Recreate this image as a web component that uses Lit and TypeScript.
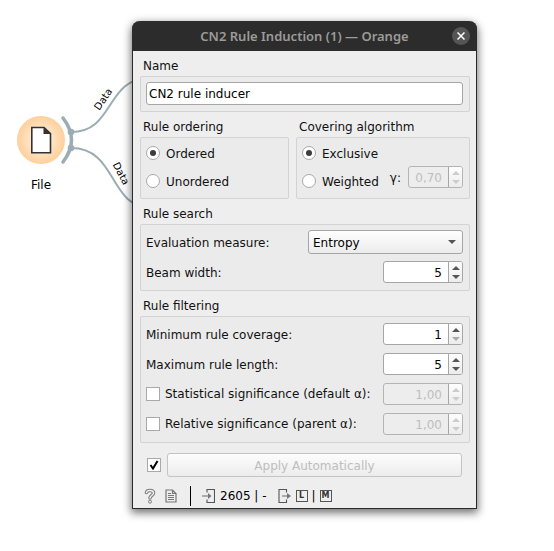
import { LitElement, html, svg, css } from "lit";
import { customElement, property } from "lit/decorators.js";

/** Numeric field with stacked up/down step buttons. */
@customElement("spin-box")
class SpinBox extends LitElement {
  @property() value = "";
  @property() label = "";
  @property({ type: Boolean }) disabled = false;
  @property({ type: Boolean }) atMinimum = false;

  static styles = css`
    :host {
      display: flex;
      box-sizing: border-box;
      width: 80px;
      height: 22px;
      border: 1px solid #a6a6a6;
      border-radius: 3px;
      overflow: hidden;
      background: #fff;
      font: 12px "DejaVu Sans", sans-serif;
    }
    :host([disabled]) {
      border-color: #b4b4b4;
      background: #ededed;
    }
    input {
      flex: 1;
      min-width: 0;
      margin: 0;
      padding: 1px 6px 0;
      border: 0;
      outline: 0;
      background: none;
      color: #000;
      font: inherit;
      text-align: right;
    }
    input:disabled {
      color: #bebebe;
    }
    .steps {
      display: flex;
      flex-direction: column;
      box-sizing: border-box;
      width: 14px;
      padding: 1px 0;
      border-left: 1px solid #a6a6a6;
      background: linear-gradient(#fefefe, #ececec);
    }
    button {
      flex: 1;
      display: flex;
      align-items: center;
      justify-content: center;
      margin: 0;
      padding: 0;
      border: 0;
      background: none;
      color: #555;
    }
    button:disabled {
      color: #aaa;
    }
    :host([disabled]) button {
      color: #ccc;
    }
    svg {
      display: block;
      fill: currentColor;
    }
  `;

  render() {
    return html`
      <input
        type="text"
        inputmode="decimal"
        aria-label=${this.label}
        .value=${this.value}
        ?disabled=${this.disabled}
      />
      <div class="steps">
        <button aria-label="Increase" ?disabled=${this.disabled}>
          <svg width="8" height="4" viewBox="0 0 8 4"><path d="M0 4L4 0L8 4Z" /></svg>
        </button>
        <button aria-label="Decrease" ?disabled=${this.disabled || this.atMinimum}>
          <svg width="8" height="4" viewBox="0 0 8 4"><path d="M0 0L4 4L8 0Z" /></svg>
        </button>
      </div>
    `;
  }
}

const fileNode = svg`
  <defs>
    <radialGradient id="glow">
      <stop offset="0" stop-color="#fff3e3" />
      <stop offset="0.5" stop-color="#ffe3c3" />
      <stop offset="1" stop-color="#ffcf9b" />
    </radialGradient>
  </defs>
  <g fill="none" stroke="#9cacb4" stroke-width="2">
    <path d="M71 132C115 132 105 78 150 78" />
    <path d="M71 148C118 148 108 208 152 208" />
    <path d="M63 118Q80 140 63 162" stroke-width="3.5" stroke-linecap="round" />
  </g>
  <circle cx="71" cy="132" r="3.3" fill="#9cacb4" />
  <circle cx="71" cy="148" r="3.3" fill="#9cacb4" />
  <circle cx="41" cy="140" r="24" fill="url(#glow)" />
  <path d="M31.8 127.5H44L50.5 133.5V152.8H31.8Z" fill="#fff" stroke="#333" stroke-width="1.6" />
  <path d="M43.5 127L51 134H43.5Z" fill="#333" />
  <text class="node" x="41" y="189" text-anchor="middle">File</text>
  <text class="link" text-anchor="middle" transform="translate(106 101) rotate(-56)">Data</text>
  <text class="link" text-anchor="middle" transform="translate(118 175) rotate(62)">Data</text>
`;

const helpIcon = html`<svg width="12" height="16" viewBox="0 0 12 16" aria-hidden="true">
  <g fill="none" stroke-linecap="round">
    <path d="M2.5 4.5C3 1.8 9.5 1.8 9.5 5C9.5 7.5 6 7.5 6 10" stroke="#808080" stroke-width="3.6" />
    <path d="M2.5 4.5C3 1.8 9.5 1.8 9.5 5C9.5 7.5 6 7.5 6 10" stroke="#eee" stroke-width="1.4" />
  </g>
  <circle cx="6" cy="13.7" r="1.5" fill="#eee" stroke="#808080" />
</svg>`;

const reportIcon = html`<svg width="12" height="14" viewBox="0 0 12 14" aria-hidden="true">
  <path d="M1 1H7.5L11 4.5V13H1Z M7.5 1V4.5H11" fill="none" stroke="#777" stroke-width="1.2" />
  <path d="M3 4.5H6M3 6.5H9M3 8.5H9M3 10.5H9" stroke="#777" />
</svg>`;

const inputIcon = html`<svg width="13" height="14" viewBox="0 0 13 14" aria-hidden="true">
  <path d="M5 3.5V.5H12.5V13.5H5V10.5" fill="none" stroke="#555" stroke-width="1.1" />
  <path d="M0 7H7" stroke="#888" stroke-width="1.3" />
  <path d="M6 4L9.5 7L6 10Z" fill="#777" />
</svg>`;

const outputIcon = html`<svg width="13" height="14" viewBox="0 0 13 14" aria-hidden="true">
  <path d="M8.5 3.5V.5H1V13.5H8.5V10.5" fill="none" stroke="#555" stroke-width="1.1" />
  <path d="M4 7H10" stroke="#888" stroke-width="1.3" />
  <path d="M9 4L13 7L9 10Z" fill="#777" />
</svg>`;

@customElement("app-root")
class AppRoot extends LitElement {
  static styles = css`
    :host {
      display: block;
      position: relative;
      box-sizing: border-box;
      min-height: 100vh;
      padding: 21px 77px 42px 132px;
      overflow: hidden;
      background: #fff;
      color: #111;
      font: 12px/20px "DejaVu Sans", sans-serif;
    }
    svg {
      display: block;
      flex: none;
    }
    .canvas {
      position: absolute;
      top: 0;
      left: 0;
    }
    .node {
      font: 12px "DejaVu Sans", sans-serif;
    }
    .link {
      font: 10px "DejaVu Sans", sans-serif;
    }
    .window {
      position: relative;
      border: 1px solid #2b2b2b;
      border-top: 0;
      border-radius: 8px 8px 0 0;
      background: #eee;
      box-shadow: 0 3px 9px 1px rgba(0, 0, 0, 0.55);
    }
    .titlebar {
      display: grid;
      grid-template-columns: 24px 1fr 24px;
      align-items: center;
      height: 30px;
      margin: 0 -1px;
      padding: 0 4px;
      border-radius: 8px 8px 0 0;
      background: #2c2c2c;
      color: #9c9b98;
    }
    h1 {
      grid-column: 2;
      margin: 0;
      font: 600 13px/20px "Noto Sans", sans-serif;
      text-align: center;
      white-space: nowrap;
    }
    .close {
      display: grid;
      place-items: center;
      justify-self: end;
      width: 18px;
      height: 18px;
      margin-right: 3px;
      padding: 0;
      border: 0;
      border-radius: 50%;
      background: #555;
    }
    .body {
      padding: 0 6px 2px 7px;
    }
    h2 {
      margin: 0;
      padding: 5px 3px 0;
      font: inherit;
    }
    .group {
      display: flex;
      flex-direction: column;
      padding: 5px 6px 6px 5px;
      border: 1px solid #d3d3d3;
      border-radius: 2px;
      background: #ebebeb;
    }
    .columns {
      display: grid;
      grid-template-columns: 149fr 174fr;
      gap: 7px;
    }
    .radios {
      gap: 2px;
      padding-top: 4px;
    }
    .search {
      gap: 7px;
      padding-bottom: 7px;
    }
    .filtering {
      gap: 8px;
      padding: 6px 6px 7px 5px;
    }
    .name {
      box-sizing: border-box;
      width: 100%;
      height: 23px;
      margin: 0;
      padding: 0 2px;
      border: 1px solid #a6a6a6;
      border-radius: 3px;
      background: #fff;
      color: #000;
      font: inherit;
    }
    .row {
      display: flex;
      align-items: center;
      justify-content: space-between;
      white-space: nowrap;
    }
    .caption {
      padding-top: 2px;
    }
    .option {
      display: flex;
      align-items: center;
      gap: 6px;
      height: 22px;
    }
    .option span {
      padding-top: 2px;
    }
    .check {
      display: flex;
      align-items: center;
      gap: 5px;
    }
    .second {
      display: flex;
      align-items: flex-end;
      justify-content: space-between;
      height: 26px;
    }
    .gamma {
      display: flex;
      align-self: flex-start;
      align-items: center;
      gap: 7px;
    }
    .short {
      width: 55px;
    }
    input[type="radio"],
    input[type="checkbox"] {
      appearance: none;
      display: grid;
      place-items: center;
      flex: none;
      box-sizing: border-box;
      width: 14px;
      height: 14px;
      margin: 0;
      border: 1px solid #a9a9a9;
      background: #fff;
    }
    input[type="radio"] {
      border-radius: 50%;
    }
    input[type="radio"]:checked::before {
      content: "";
      width: 6px;
      height: 6px;
      border-radius: 50%;
      background: #3c3c3c;
    }
    .tick {
      display: grid;
      align-items: center;
      justify-items: center;
    }
    .tick > * {
      grid-area: 1 / 1;
    }
    .tick svg {
      z-index: 1;
      pointer-events: none;
    }
    .combo {
      display: grid;
      align-items: center;
      width: 155px;
    }
    .combo > * {
      grid-area: 1 / 1;
    }
    .combo svg {
      justify-self: end;
      margin-right: 7px;
      pointer-events: none;
    }
    select {
      appearance: none;
      box-sizing: border-box;
      width: 100%;
      height: 24px;
      margin: 0;
      padding: 1px 4px 0;
      border: 1px solid #a6a6a6;
      border-radius: 3px;
      background: linear-gradient(#fefefe, #ececec);
      color: #000;
      font: inherit;
    }
    .commit {
      display: flex;
      align-items: center;
      gap: 6px;
      padding: 10px 8px 0 7px;
    }
    .apply {
      flex: 1;
      height: 24px;
      padding: 1px 0 0;
      border: 1px solid #c4c4c4;
      border-radius: 3px;
      background: linear-gradient(#fdfdfd, #ececec);
      color: #bebebe;
      font: inherit;
    }
    .status {
      display: flex;
      align-items: center;
      height: 20px;
      padding: 9px 4px 0;
      color: #000;
    }
    .tool {
      padding: 0;
      border: 0;
      background: none;
    }
    .tool + .tool {
      margin-left: 9px;
    }
    .divider {
      width: 1px;
      height: 20px;
      margin: 0 11px 0 13px;
      background: #000;
    }
    .flow {
      display: flex;
      align-items: center;
      gap: 5px;
      margin-right: 11px;
    }
    .badges {
      display: flex;
      align-items: center;
      gap: 4px;
    }
    .badge {
      box-sizing: border-box;
      width: 12px;
      height: 12px;
      border: 1px solid #555;
      color: #333;
      font: bold 8px/10px "DejaVu Sans", sans-serif;
      text-align: center;
    }
  `;

  private option(group: string, text: string, checked = false) {
    return html`<label class="option">
      <input type="radio" name=${group} ?checked=${checked} /><span>${text}</span>
    </label>`;
  }

  private significance(id: string, text: string) {
    return html`<div class="row">
      <label class="check"><input type="checkbox" id=${id} />${text}</label>
      <spin-box label=${text} value="1,00" disabled></spin-box>
    </div>`;
  }

  render() {
    return html`
      <svg class="canvas" width="160" height="220" viewBox="0 0 160 220">${fileNode}</svg>

      <main class="window">
        <header class="titlebar">
          <h1>CN2 Rule Induction (1) — Orange</h1>
          <button class="close" aria-label="Close">
            <svg width="8" height="8" viewBox="0 0 8 8">
              <path d="M.5 .5L7.5 7.5M7.5 .5L.5 7.5" stroke="#fff" stroke-width="1.5" />
            </svg>
          </button>
        </header>

        <div class="body">
          <h2><label for="name">Name</label></h2>
          <div class="group">
            <input class="name" id="name" type="text" .value=${"CN2 rule inducer"} />
          </div>

          <div class="columns">
            <section>
              <h2>Rule ordering</h2>
              <div class="group radios">
                ${this.option("ordering", "Ordered", true)}
                <div class="second">${this.option("ordering", "Unordered")}</div>
              </div>
            </section>
            <section>
              <h2>Covering algorithm</h2>
              <div class="group radios">
                ${this.option("covering", "Exclusive", true)}
                <div class="second">
                  ${this.option("covering", "Weighted")}
                  <div class="gamma">
                    <span class="caption">γ:</span>
                    <spin-box class="short" label="γ" value="0,70" disabled></spin-box>
                  </div>
                </div>
              </div>
            </section>
          </div>

          <h2>Rule search</h2>
          <div class="group search">
            <div class="row">
              <label class="caption" for="measure">Evaluation measure:</label>
              <div class="combo">
                <select id="measure">
                  <option>Entropy</option>
                </select>
                <svg width="8" height="4" viewBox="0 0 8 4"><path d="M0 0L4 4L8 0Z" fill="#555" /></svg>
              </div>
            </div>
            <div class="row">
              <span class="caption">Beam width:</span>
              <spin-box label="Beam width" value="5"></spin-box>
            </div>
          </div>

          <h2>Rule filtering</h2>
          <div class="group filtering">
            <div class="row">
              <span class="caption">Minimum rule coverage:</span>
              <spin-box label="Minimum rule coverage" value="1" .atMinimum=${true}></spin-box>
            </div>
            <div class="row">
              <span class="caption">Maximum rule length:</span>
              <spin-box label="Maximum rule length" value="5"></spin-box>
            </div>
            ${this.significance("statistical", "Statistical significance (default α):")}
            ${this.significance("relative", "Relative significance (parent α):")}
          </div>

          <div class="commit">
            <span class="tick">
              <input type="checkbox" aria-label="Apply automatically" checked />
              <svg width="10" height="10" viewBox="0 0 10 10">
                <path d="M1.5 5L4 8.5L8.5 1" fill="none" stroke="#000" stroke-width="2" />
              </svg>
            </span>
            <button class="apply" disabled>Apply Automatically</button>
          </div>

          <footer class="status">
            <button class="tool" aria-label="Help">${helpIcon}</button>
            <button class="tool" aria-label="Report">${reportIcon}</button>
            <span class="divider"></span>
            <span class="flow">${inputIcon}<span>2605 | -</span></span>
            <span class="flow">
              ${outputIcon}
              <span class="badges">
                <span class="badge">L</span><span>|</span><span class="badge">M</span>
              </span>
            </span>
          </footer>
        </div>
      </main>
    `;
  }
}
